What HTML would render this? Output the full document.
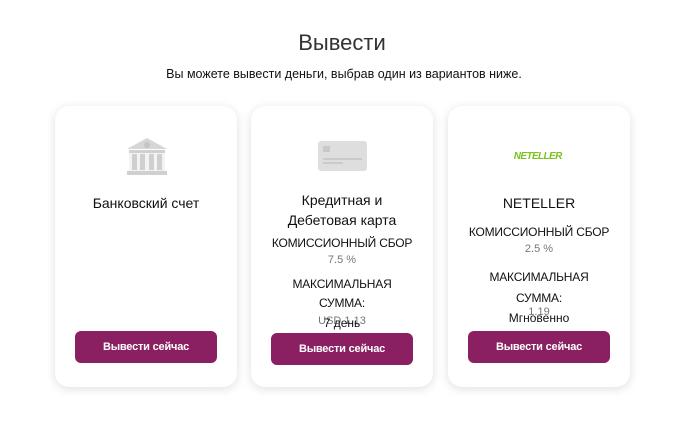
<!DOCTYPE html>
<html><head><meta charset="utf-8"><style>
body{margin:0;width:700px;height:428px;background:#fff;font-family:"Liberation Sans",sans-serif;position:relative;overflow:hidden;color:#111}
.a{position:absolute;white-space:nowrap;text-align:center;transform:translateX(-50%)}
.card{position:absolute;top:106px;width:182px;height:281px;background:#fff;border-radius:14px;box-shadow:0 2px 10px rgba(0,0,0,0.13)}
.btn{position:absolute;width:142px;height:32px;background:#8a2062;border-radius:6px;color:#fff;font-weight:bold;font-size:11px;letter-spacing:-0.2px;line-height:32px;text-align:center}
.t{font-size:14px}
.k{font-size:12px;letter-spacing:-0.2px}
.g{font-size:11px;color:#777}
</style></head><body>
<div class="a" style="left:342px;top:30px;font-size:22px;color:#333">Вывести</div>
<div class="a" style="left:344px;top:67px;font-size:12.5px">Вы можете вывести деньги, выбрав один из вариантов ниже.</div>

<div class="card" style="left:55px"></div>
<div class="card" style="left:251px"></div>
<div class="card" style="left:448px"></div>

<svg style="position:absolute;left:126px;top:138px" width="42" height="38" viewBox="0 0 42 38">
<polygon points="21,0 41,11 1,11" fill="#d6d6d6"/><circle cx="21" cy="7" r="3" fill="#c4c4c4"/>
<rect x="3" y="12" width="36" height="3" fill="#d0d0d0"/>
<rect x="6" y="16" width="5" height="16" fill="#c8c8c8"/><rect x="14" y="16" width="5" height="16" fill="#c8c8c8"/>
<rect x="23" y="16" width="5" height="16" fill="#c8c8c8"/><rect x="31" y="16" width="5" height="16" fill="#c8c8c8"/>
<rect x="3" y="15" width="36" height="18" fill="#ddd" opacity="0.35"/>
<rect x="1" y="33" width="40" height="4" fill="#d0d0d0"/></svg>
<div class="a t" style="left:146px;top:195px">Банковский счет</div>
<div class="btn" style="left:75px;top:331px">Вывести сейчас</div>

<svg style="position:absolute;left:318px;top:141px" width="49" height="30" viewBox="0 0 49 30">
<rect x="0" y="0" width="49" height="30" rx="3" fill="#dedede"/>
<rect x="5" y="5" width="7" height="6" fill="#c9c9c9"/>
<rect x="5" y="17" width="39" height="2" fill="#cacaca"/><rect x="5" y="21" width="20" height="2" fill="#cacaca"/></svg>
<div class="a t" style="left:342px;top:190px;line-height:20px">Кредитная и<br>Дебетовая карта</div>
<div class="a k" style="left:342px;top:236px">КОМИССИОННЫЙ СБОР</div>
<div class="a g" style="left:342px;top:254px">7.5 %</div>
<div class="a k" style="left:342px;top:275px;line-height:19px">МАКСИМАЛЬНАЯ<br>СУММА:</div>
<div class="a g" style="left:342px;top:315px">USD 1.13</div>
<div class="a" style="left:342px;top:316px;font-size:12px">7 день</div>
<div class="btn" style="left:271px;top:333px">Вывести сейчас</div>

<div class="a" style="left:538px;top:151px;font-size:10px;font-weight:bold;font-style:italic;color:#7dc21e;letter-spacing:-0.6px">NETELLER<span style="font-size:4px">.</span></div>
<div class="a t" style="left:539px;top:195px">NETELLER</div>
<div class="a k" style="left:539px;top:225px">КОМИССИОННЫЙ СБОР</div>
<div class="a g" style="left:539px;top:243px">2.5 %</div>
<div class="a k" style="left:539px;top:267px;line-height:21px">МАКСИМАЛЬНАЯ<br>СУММА:</div>
<div class="a g" style="left:539px;top:306px">1.19</div>
<div class="a" style="left:539px;top:311px;font-size:12px">Мгновенно</div>
<div class="btn" style="left:468px;top:331px">Вывести сейчас</div>
</body></html>
